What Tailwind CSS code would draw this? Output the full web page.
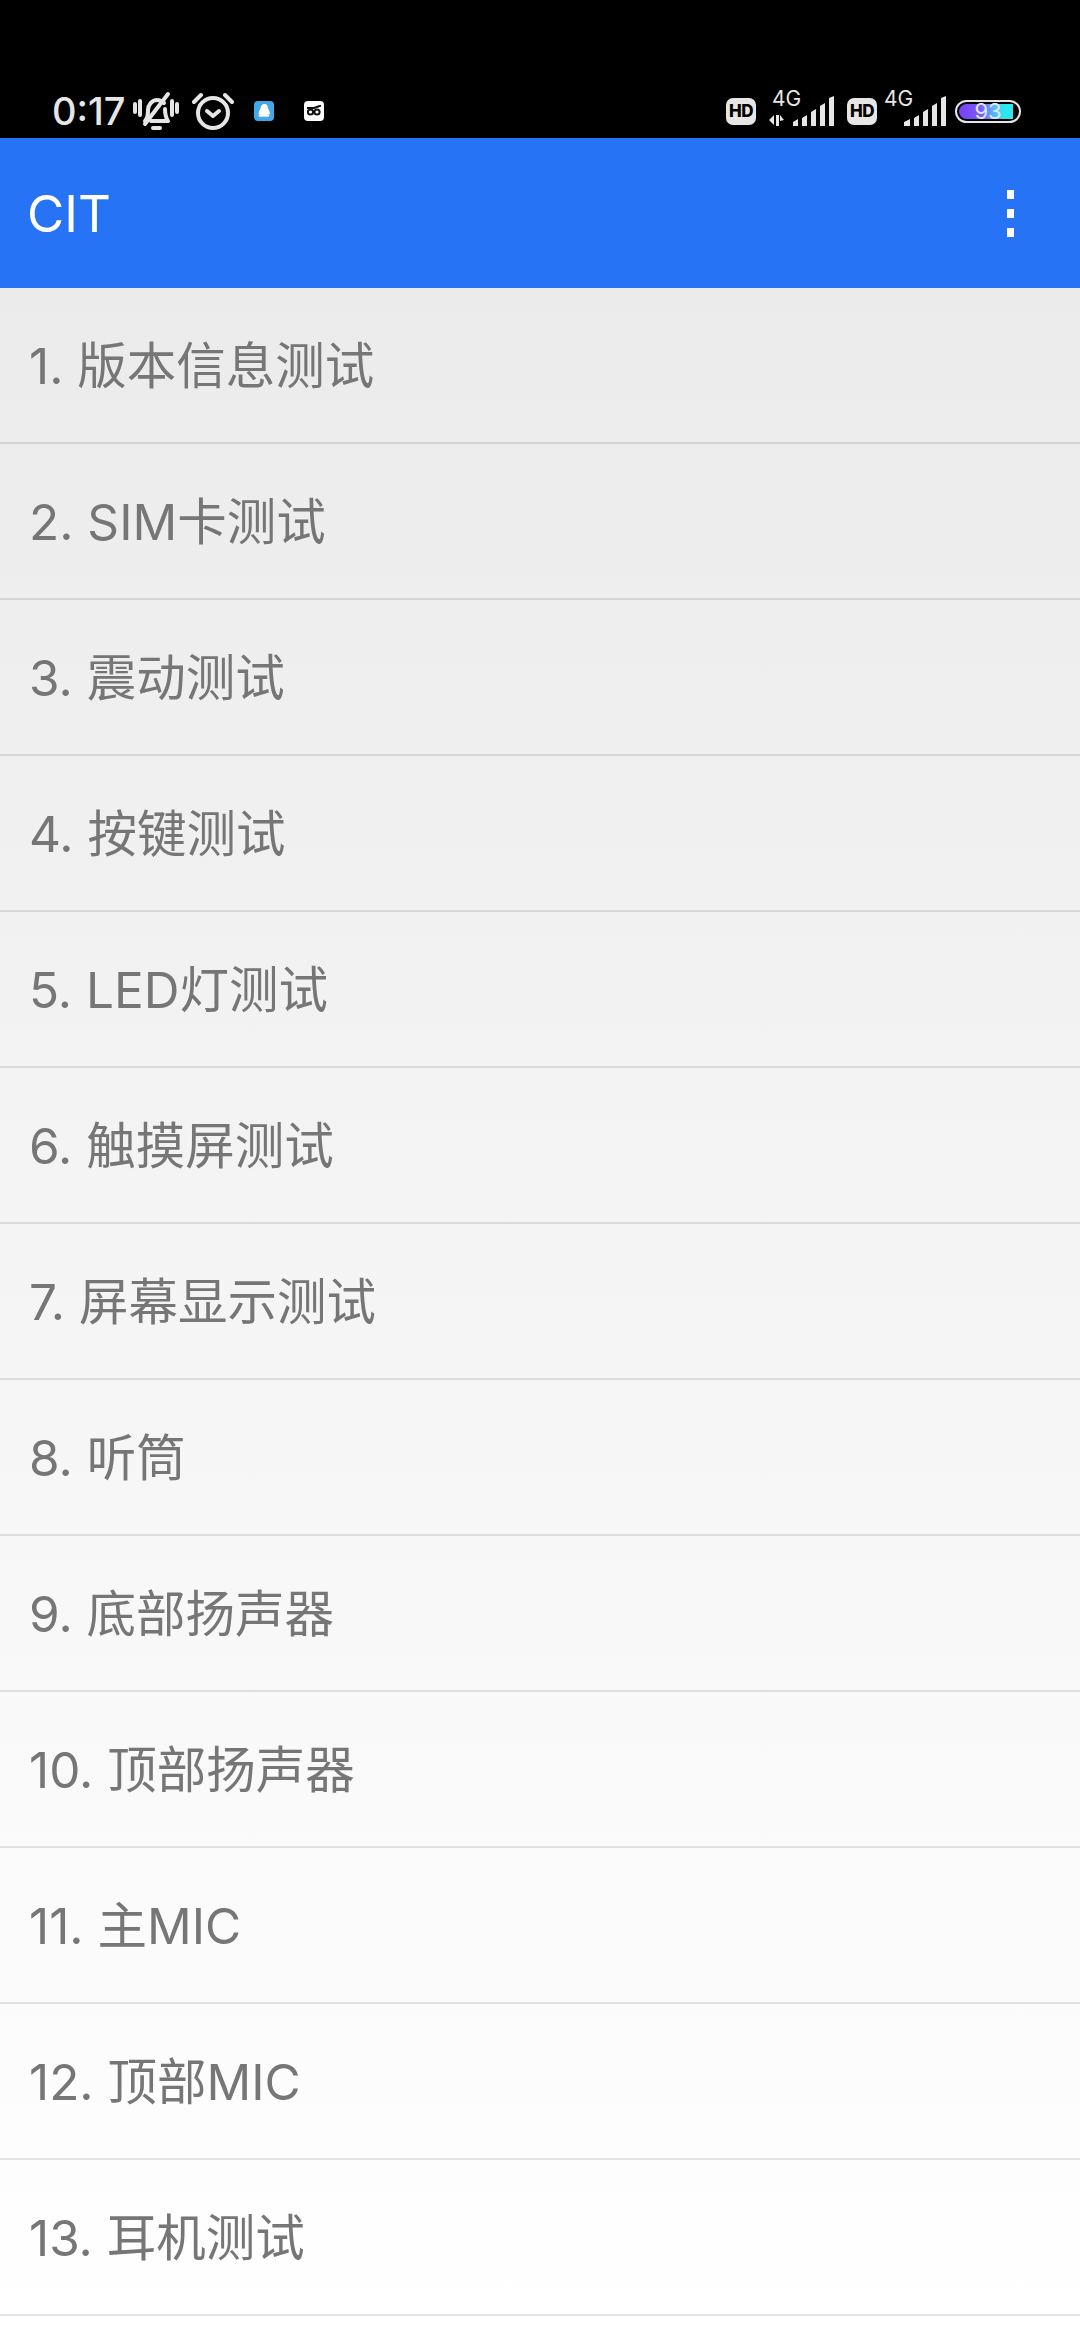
<!DOCTYPE html>
<html lang="zh-CN">
<head>
    <meta charset="UTF-8">
    <meta name="viewport" content="width=device-width, initial-scale=1.0">
    <title>CIT</title>
    <script src="https://cdn.jsdelivr.net/npm/@tailwindcss/browser@4"></script>
</head>
<body class="bg-white font-['Inter','Noto_Sans_CJK_SC',sans-serif] w-[1080px] h-[2340px] overflow-hidden">

<!-- Status bar -->
<div class="h-[138px] bg-black text-[#e6e6e6] flex items-end justify-between pb-[5px] pl-[52px] pr-[59px]">
    <div class="flex items-center h-[44px]">
        <span class="text-[38px] font-medium leading-none w-[81px]">0:17</span>
        <svg class="w-[46px] h-[40px]" viewBox="0 0 46 40" fill="none" stroke="#e6e6e6" stroke-width="4" stroke-linecap="round" stroke-linejoin="round">
            <path d="M2 13v8M7 10v14M39 10v14M44 13v8"/>
            <path d="M12 30c3-3 3-6 3-11 0-5 4-10 9-10 3 0 5 1 7 3M32 18c0 5 1 9 3 12H18"/>
            <path d="M12 33 35 3"/>
            <path d="M20 37h7"/>
        </svg>
        <svg class="ml-[13px] w-[42px] h-[38px]" viewBox="0 0 42 38" fill="none" stroke="#e6e6e6" stroke-width="4" stroke-linecap="round" stroke-linejoin="round">
            <circle cx="21" cy="21" r="15"/>
            <path d="M15 19l6 5 6-5"/>
            <path d="M2 10 9 3M40 10l-7-7"/>
        </svg>
        <!-- QQ -->
        <div class="ml-[20px] w-[20px] h-[20px] rounded-[4px] bg-[#45a8e6] flex items-center justify-center">
            <svg class="w-[13px] h-[14px]" viewBox="0 0 13 14" fill="#fff"><path d="M6.500 0C9 0 10 2 10 4.500c1 1.500 2 4 2 6l-1.500-.8c0 1 .500 1.800 1 2.300-1 1-3 1-5.500.5-2.500.5-4.500.5-5.500-.5.500-.5 1-1.300 1-2.300L.5 10.500c0-2 1-4.500 2-6C2.500 2 4 0 6.500 0z"/></svg>
        </div>
        <!-- owl -->
        <div class="ml-[30px] w-[20px] h-[20px] rounded-[4px] bg-white flex items-center justify-center">
            <svg class="w-[16px] h-[12px]" viewBox="0 0 16 12" fill="none" stroke="#111" stroke-width="2"><path d="M1 3 8 3l7-2.500"/><circle cx="4.500" cy="7" r="2.600"/><circle cx="11" cy="7" r="2.600"/></svg>
        </div>
    </div>

    <div class="flex items-center h-[44px]">
        <div class="w-[30px] h-[27px] rounded-[7px] bg-[#e6e6e6] text-black text-[17px] font-extrabold tracking-[-0.5px] leading-none flex items-center justify-center">HD</div>
        <!-- SIM 1 -->
        <div class="relative ml-[12px] w-[67px] h-[36px]">
            <span class="absolute left-[4px] top-[-5px] text-[21px] leading-none">4G</span>
            <svg class="absolute left-0 top-0 w-[67px] h-[36px]" viewBox="0 0 67 36" fill="#e6e6e6">
                <path d="M1 27l5-5v10zM8 22h3v11H8zM12 22l4 5-4 1z"/>
                <path d="M20 29l5-3v7h-5zM29 25l5-3v11h-5zM38 19l5-3v17h-5zM47 13l5-3v23h-5zM56 5l5-2v30h-5z" transform="translate(5 0)"/>
            </svg>
        </div>
        <div class="ml-[12px] w-[30px] h-[27px] rounded-[7px] bg-[#e6e6e6] text-black text-[17px] font-extrabold tracking-[-0.5px] leading-none flex items-center justify-center">HD</div>
        <!-- SIM 2 -->
        <div class="relative ml-[7px] w-[67px] h-[36px]">
            <span class="absolute left-0 top-[-5px] text-[21px] leading-none">4G</span>
            <svg class="absolute left-0 top-0 w-[67px] h-[36px]" viewBox="0 0 67 36" fill="#e6e6e6">
                <path d="M20 29l6-3v7h-6zM30 25l5-3v11h-5zM39 19l5-3v17h-5zM48 13l5-3v23h-5zM57 5l5-2v30h-5z"/>
            </svg>
        </div>
        <!-- battery -->
        <div class="relative ml-[4px] w-[66px] h-[23px] rounded-full border-2 border-[#e6e6e6] p-[2px] bg-black">
            <div class="h-full rounded-l-full bg-[linear-gradient(90deg,#7a3ff5_0%,#7a5cf5_40%,#4fc8f5_70%,#2ee6ee_85%)] w-[54px]"></div>
            <span class="absolute inset-0 flex items-center justify-center text-[22px] leading-none text-[#dfe6ff]">93</span>
        </div>
    </div>
</div>

<!-- Action bar -->
<header class="h-[150px] bg-[#2673f5] flex items-center justify-between pl-[27px] pr-[66px]">
    <h1 class="text-[51px] leading-none text-white">CIT</h1>
    <div class="flex flex-col gap-[10px]">
        <span class="w-[7px] h-[9px] bg-white"></span>
        <span class="w-[7px] h-[9px] bg-white"></span>
        <span class="w-[7px] h-[9px] bg-white"></span>
    </div>
</header>

<!-- Test list -->
<ul id="list" class="h-[2052px] bg-[linear-gradient(180deg,#ebebeb_0%,#ffffff_100%)] text-[49.500px] leading-none text-[#767676] overflow-hidden">
    <li class="h-[156px] border-b-2 border-black/10 pl-[29px] pt-[4px] flex items-center">1. 版本信息测试</li>
    <li class="h-[156px] border-b-2 border-black/10 pl-[29px] pt-[4px] flex items-center">2. SIM卡测试</li>
    <li class="h-[156px] border-b-2 border-black/10 pl-[29px] pt-[4px] flex items-center">3. 震动测试</li>
    <li class="h-[156px] border-b-2 border-black/10 pl-[29px] pt-[4px] flex items-center">4. 按键测试</li>
    <li class="h-[156px] border-b-2 border-black/10 pl-[29px] pt-[4px] flex items-center">5. LED灯测试</li>
    <li class="h-[156px] border-b-2 border-black/10 pl-[29px] pt-[4px] flex items-center">6. 触摸屏测试</li>
    <li class="h-[156px] border-b-2 border-black/10 pl-[29px] pt-[4px] flex items-center">7. 屏幕显示测试</li>
    <li class="h-[156px] border-b-2 border-black/10 pl-[29px] pt-[4px] flex items-center">8. 听筒</li>
    <li class="h-[156px] border-b-2 border-black/10 pl-[29px] pt-[4px] flex items-center">9. 底部扬声器</li>
    <li class="h-[156px] border-b-2 border-black/10 pl-[29px] pt-[4px] flex items-center">10. 顶部扬声器</li>
    <li class="h-[156px] border-b-2 border-black/10 pl-[29px] pt-[4px] flex items-center">11. 主MIC</li>
    <li class="h-[156px] border-b-2 border-black/10 pl-[29px] pt-[4px] flex items-center">12. 顶部MIC</li>
    <li class="h-[156px] border-b-2 border-black/10 pl-[29px] pt-[4px] flex items-center">13. 耳机测试</li>
</ul>

</body>
</html>
